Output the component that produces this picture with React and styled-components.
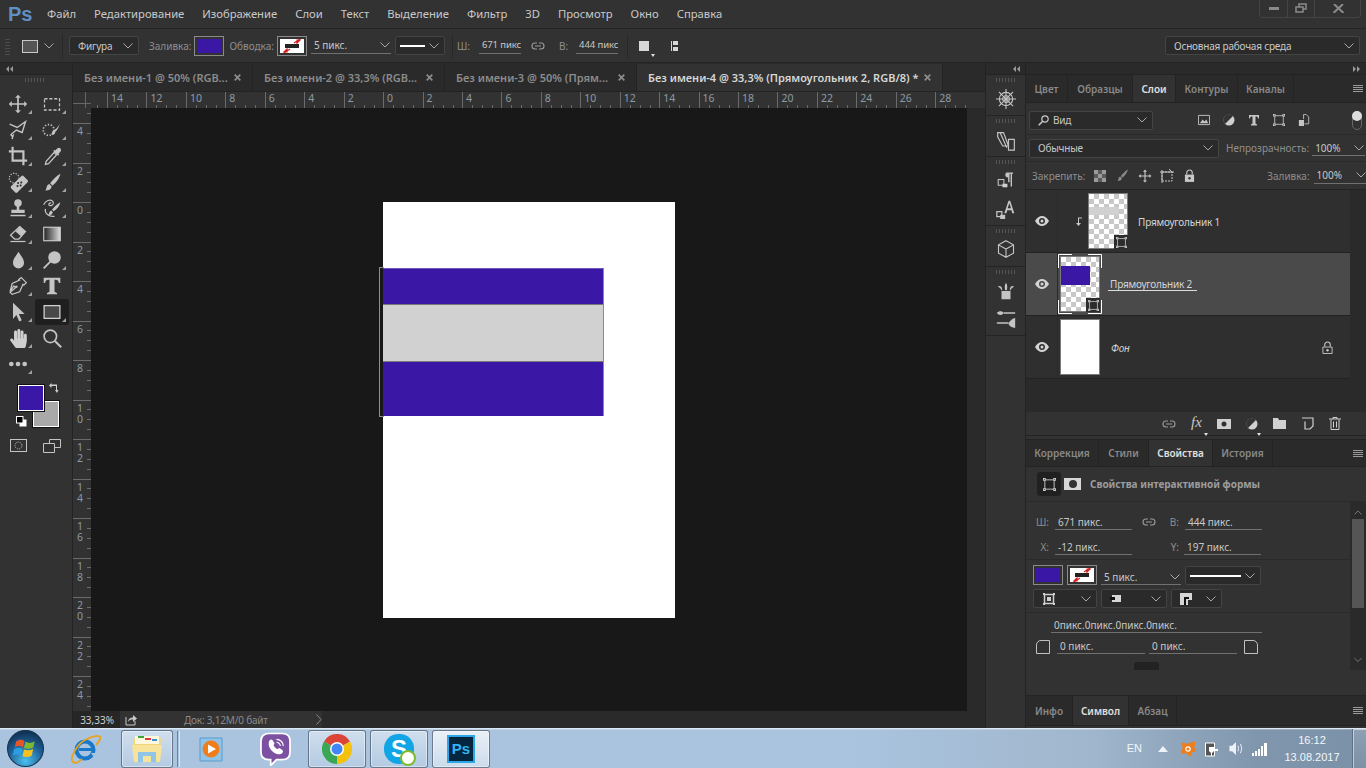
import React from "react";
import styled, { createGlobalStyle } from "styled-components";
import { FaHandPaper } from "react-icons/fa";

const Global = createGlobalStyle`
  html, body { margin: 0; padding: 0; background: #323232; }
  * { box-sizing: border-box; }
  body { font-family: "Noto Sans", "Open Sans", sans-serif; }
`;

const PANEL = "#323232";
const DARK = "#2a2a2a";
const LINE = "#232323";
const PURPLE = "#3a17a5";

const Screen = styled.div`
  width: 1366px;
  height: 768px;
  overflow: hidden;
  display: flex;
  flex-direction: column;
  background: ${PANEL};
  color: #c8c8c8;
  font-size: 10px;
  line-height: 1;
`;

const Ico = styled.svg`
  display: block;
  flex: none;
  width: ${(p) => p.$w || 16}px;
  height: ${(p) => p.$h || p.$w || 16}px;
  margin-left: ${(p) => p.$ml || 0}px;
  color: ${(p) => p.$c || "#c4c4c4"};
  fill: currentColor;
`;

const Icon = ({ w, h, ml, c, box = "0 0 24 24", children }) => (
  <Ico $w={w} $h={h} $ml={ml} $c={c} viewBox={box}>
    {children}
  </Ico>
);

const stroke = (w = 2) => ({ fill: "none", stroke: "currentColor", strokeWidth: w });

/* ---------- menu ---------- */

const MenuBar = styled.div`
  height: 29px;
  flex: none;
  display: flex;
  align-items: center;
  padding-left: 8px;
  border-bottom: 1px solid ${LINE};
`;

const Logo = styled.div`
  width: 39px;
  font-size: 20px;
  font-weight: 700;
  color: #5f8fc4;
  font-family: "Liberation Sans", sans-serif;
`;

const MenuItem = styled.span`
  margin-right: 18px;
  font-size: 11.25px;
  color: #c9c9c9;
  white-space: nowrap;
`;

const WinButtons = styled.div`
  margin-left: auto;
  margin-right: 5px;
  margin-top: -11px;
  width: 102px;
  height: 18px;
  display: grid;
  grid-template-columns: 28px 27px 47px;
  border: 1px solid #444;
  border-top: 0;
  border-radius: 0 0 4px 4px;
  & > div {
    display: flex;
    align-items: center;
    justify-content: center;
    border-right: 1px solid #444;
  }
  & > div:last-child { border-right: 0; }
`;

/* ---------- options ---------- */

const OptionsBar = styled.div`
  height: 34px;
  flex: none;
  display: flex;
  align-items: center;
  border-bottom: 1px solid ${LINE};
`;

const Grip = styled.div`
  flex: none;
  width: ${(p) => p.$w || 5}px;
  height: ${(p) => p.$h || 18}px;
  margin-left: ${(p) => p.$ml || 0}px;
  background: ${(p) =>
    p.$across
      ? "repeating-linear-gradient(90deg,#555 0 1px,transparent 1px 3px)"
      : "repeating-linear-gradient(0deg,#4c4c4c 0 1px,transparent 1px 3px)"};
`;

const Divider = styled.div`
  flex: none;
  width: 1px;
  height: 24px;
  background: #282828;
  margin-left: ${(p) => p.$ml || 0}px;
`;

const Select = styled.div`
  flex: none;
  width: ${(p) => p.$w}px;
  height: ${(p) => p.$h || 19}px;
  margin-left: ${(p) => p.$ml || 0}px;
  display: flex;
  align-items: center;
  justify-content: space-between;
  padding: 0 5px 0 8px;
  background: #2a2a2a;
  border: 1px solid #444;
  border-radius: 2px;
  letter-spacing: -0.2px;
  color: #c8c8c8;
`;

const WorkspaceSelect = styled(Select)`
  margin-left: auto;
  margin-right: 6px;
`;

const SelectLead = styled.span`
  display: flex;
  align-items: center;
  gap: 4px;
`;

const Chevron = ({ ml, c = "#a8a8a8", w = 10 }) => (
  <Icon w={w} h={6} ml={ml} c={c} box="0 0 10 6">
    <path d="M.5.5 5 5 9.5.5" {...stroke(1)} />
  </Icon>
);

const Label = styled.span`
  flex: none;
  margin-left: ${(p) => p.$ml || 0}px;
  color: #8e8e8e;
  font-size: 10px;
  white-space: nowrap;
`;

const Swatch = styled.div`
  flex: none;
  width: 30px;
  height: 20px;
  margin-left: ${(p) => p.$ml || 0}px;
  border: 1px solid #8a8a8a;
  padding: 2px;
  display: flex;
  & > div {
    flex: 1;
    background: ${(p) => p.$fill || "#fff"};
    display: flex;
  }
`;

const NoStroke = () => (
  <svg viewBox="0 0 24 14" width="100%" height="100%" preserveAspectRatio="none">
    <rect x="5" y="5" width="14" height="4" fill="#222" />
    <path d="M17 1 20 1 17 4ZM4 13 7 10 7 13Z M14 4 20 0 M4 14 10 10" stroke="#d01f1f" strokeWidth="1.2" fill="#d01f1f" />
  </svg>
);

const Field = styled.div`
  flex: none;
  width: ${(p) => p.$w}px;
  height: 16px;
  margin-left: ${(p) => p.$ml || 0}px;
  display: flex;
  align-items: center;
  justify-content: space-between;
  padding: 0 ${(p) => p.$pr ?? 3}px 0 3px;
  border-bottom: 1px solid #707070;
  color: #c8c8c8;
  font-size: 10px;
  white-space: nowrap;
  overflow: hidden;
`;

const Clip = styled.span`
  font-size: 9.5px;
  letter-spacing: -0.1px;
`;

const LinkIcon = ({ ml }) => (
  <Icon w={14} h={8} ml={ml} c="#9a9a9a" box="0 0 14 8">
    <path d="M6 1H4a3 3 0 0 0 0 6h2M8 1h2a3 3 0 0 1 0 6H8M4 4h6" {...stroke(1.1)} />
  </Icon>
);

const LinkSlot = styled.div`
  height: 16px;
  display: flex;
  align-items: center;
`;

const LineSelect = styled(Select)`
  padding: 0 5px 0 4px;
  gap: 4px;
  & > i {
    flex: 1;
    height: 2px;
    background: #fff;
  }
`;

const HasMenu = styled.div`
  position: relative;
  flex: none;
  margin-left: ${(p) => p.$ml || 0}px;
  &::after {
    content: "";
    position: absolute;
    right: ${(p) => p.$r ?? -6}px;
    bottom: -6px;
    border-left: 2.5px solid transparent;
    border-right: 2.5px solid transparent;
    border-top: 3px solid #e0e0e0;
  }
`;

/* ---------- workspace ---------- */

const Workspace = styled.div`
  flex: 1;
  min-height: 0;
  display: flex;
`;

const CollapseStrip = styled.div`
  height: 12px;
  flex: none;
  background: ${DARK};
  display: flex;
  justify-content: ${(p) => p.$justify || "flex-start"};
  align-items: center;
  padding: 0 5px;
  border-bottom: 1px solid ${LINE};
`;

const Arrows = ({ flip }) => (
  <Icon w={8} h={6} c="#9a9a9a" box="0 0 8 6">
    <path d={flip ? "M0 0 3 3 0 6ZM4 0 7 3 4 6Z" : "M4 0 1 3 4 6ZM8 0 5 3 8 6Z"} />
  </Icon>
);

const ToolColumn = styled.div`
  width: 73px;
  flex: none;
  display: flex;
  flex-direction: column;
  border-right: 1px solid ${LINE};
`;

const ToolGrip = styled.div`
  height: 16px;
  padding: 3px 0 0 25px;
`;

const ToolGrid = styled.div`
  display: grid;
  grid-template-columns: 34px 34px;
  grid-auto-rows: 26px;
  padding-left: 1px;
`;

const Tool = styled.div`
  position: relative;
  display: flex;
  align-items: center;
  justify-content: center;
  background: ${(p) => (p.$active ? "#1f1f1f" : "transparent")};
  border-radius: 3px;
  &::after {
    content: "";
    display: ${(p) => (p.$more ? "block" : "none")};
    position: absolute;
    right: 3px;
    bottom: 3px;
    width: 0;
    height: 0;
    border-left: 4px solid transparent;
    border-bottom: 4px solid #a0a0a0;
  }
`;

const Colors = styled.div`
  position: relative;
  height: 47px;
  margin-top: 5px;
  flex: none;
`;

const ColorChip = styled.div`
  position: absolute;
  left: ${(p) => p.$x}px;
  top: ${(p) => p.$y}px;
  width: 26px;
  height: 26px;
  background: ${(p) => p.$c};
  border: 1px solid #fff;
  outline: 1px solid #111;
`;

const ColorGlyph = styled.div`
  position: absolute;
  left: ${(p) => p.$x}px;
  top: ${(p) => p.$y}px;
`;

const ModeRow = styled.div`
  display: flex;
  padding: 10px 0 0 10px;
  gap: 16px;
`;

const DocArea = styled.div`
  width: 912px;
  flex: none;
  display: flex;
  flex-direction: column;
`;

const TabRow = styled.div`
  height: 29px;
  flex: none;
  display: flex;
  background: ${DARK};
  padding-top: 1px;
  border-bottom: 1px solid ${LINE};
`;

const DocTab = styled.div`
  width: ${(p) => p.$w}px;
  flex: none;
  display: flex;
  align-items: center;
  justify-content: space-between;
  padding: 0 11px;
  background: ${(p) => (p.$active ? PANEL : DARK)};
  border-right: 1px solid ${LINE};
  color: ${(p) => (p.$active ? "#d6d6d6" : "#8c8c8c")};
  font-weight: 600;
  font-size: 11px;
  white-space: nowrap;
`;

const CloseX = () => (
  <Icon w={7} c="#8c8c8c" box="0 0 7 7">
    <path d="M.7.7 6.3 6.3M6.3.7.7 6.3" {...stroke(1.7)} />
  </Icon>
);

const RulerTop = styled.div`
  height: 16px;
  flex: none;
  display: flex;
  overflow: hidden;
  background: ${PANEL};
`;

const RulerCorner = styled.div`
  width: 18px;
  flex: none;
  background:
    linear-gradient(90deg, transparent 12px, #666 12px 13px, transparent 13px) 0 0 / 18px 16px,
    linear-gradient(0deg, transparent 4px, #666 4px 5px, transparent 5px) 0 0 / 18px 16px;
`;

const RulerOffset = styled.div`
  flex: none;
  width: 16px;
  height: 16px;
  background: repeating-linear-gradient(90deg, transparent 0 6px, #6a6a6a 6px 7px, transparent 7px 10px) bottom / 100% 3px no-repeat;
`;

const RulerCell = styled.div`
  flex: none;
  width: 39.45px;
  padding: 1px 0 0 3px;
  border-left: 1px solid #6b6b6b;
  color: #8d9aa6;
  font-size: 10.5px;
  background: repeating-linear-gradient(90deg, transparent 0 9px, #6a6a6a 9px 10px) bottom / 100% 3px no-repeat;
`;

const DocMiddle = styled.div`
  flex: 1;
  min-height: 0;
  display: flex;
`;

const RulerLeft = styled.div`
  width: 18px;
  flex: none;
  overflow: hidden;
`;

const RulerRow = styled.div`
  height: 39.5px;
  padding: 2px 0 0 4px;
  border-top: 1px solid #6b6b6b;
  color: #8d9aa6;
  font-size: 10.5px;
  line-height: 11px;
  white-space: pre-line;
  background: repeating-linear-gradient(0deg, transparent 0 9px, #6a6a6a 9px 10px) right / 4px 100% no-repeat;
`;

const RulerStub = styled.div`
  height: 15px;
  background: repeating-linear-gradient(0deg, transparent 0 9px, #6a6a6a 9px 10px) right / 4px 100% no-repeat;
`;

const Canvas = styled.div`
  flex: 1;
  background: #181818;
  padding: 94px 0 0 292px;
`;

const Page = styled.div`
  width: 292px;
  height: 416px;
  background: #fff;
  padding-top: 66px;
`;

const ShapeStack = styled.div`
  position: relative;
  width: 221px;
  display: flex;
  flex-direction: column;
  border-right: 1px solid #8a8a9a;
  &::before {
    content: "";
    position: absolute;
    left: -4px;
    top: -1px;
    bottom: -1px;
    width: 4px;
    border: 1px solid #8e8e8e;
    border-right: 0;
  }
`;

const Band = styled.div`
  height: ${(p) => p.$h}px;
  background: ${(p) => p.$c};
  border-top: 1px solid ${(p) => p.$edge};
`;

const Gutter = styled.div`
  width: 18px;
  flex: none;
  background: ${DARK};
`;

const StatusBar = styled.div`
  height: 17px;
  flex: none;
  display: flex;
  align-items: center;
  background: ${DARK};
`;

const Zoom = styled.div`
  width: 47px;
  flex: none;
  height: 100%;
  display: flex;
  align-items: center;
  justify-content: flex-end;
  padding-right: 6px;
  background: #262626;
  color: #cfcfcf;
`;

const DocInfo = styled.div`
  width: 202px;
  height: 100%;
  display: flex;
  align-items: center;
  background: ${PANEL};
  padding-left: 5px;
  color: #8a8a8a;
  letter-spacing: -0.2px;
  & > span {
    margin-left: 47px;
    flex: 1;
  }
`;

/* ---------- dock ---------- */

const Dock = styled.div`
  width: 41px;
  flex: none;
  display: flex;
  flex-direction: column;
  border-left: 1px solid ${LINE};
  border-right: 1px solid ${LINE};
`;

const DockGroup = styled.div`
  height: ${(p) => p.$h}px;
  flex: none;
  border-bottom: 1px solid ${LINE};
  display: flex;
  flex-direction: column;
  align-items: center;
  padding-top: 3px;
  & > svg:first-of-type {
    margin-top: 7px;
  }
  & > svg + svg {
    margin-top: ${(p) => p.$gap || 0}px;
  }
`;

/* ---------- panels ---------- */

const Panels = styled.div`
  flex: 1;
  display: flex;
  flex-direction: column;
  min-width: 0;
`;

const PanelTabs = styled.div`
  height: ${(p) => p.$h || 28}px;
  flex: none;
  display: flex;
  align-items: stretch;
  background: ${DARK};
  border-bottom: 1px solid ${LINE};
  padding-right: 3px;
`;

const PanelTab = styled.div`
  width: ${(p) => p.$w}px;
  flex: none;
  display: flex;
  align-items: center;
  justify-content: center;
  background: ${(p) => (p.$active ? PANEL : "transparent")};
  border-right: 1px solid ${LINE};
  color: ${(p) => (p.$active ? "#e0e0e0" : "#888")};
  font-weight: 600;
`;

const PanelMenu = styled.div`
  margin: auto 0 auto auto;
  width: 10px;
  height: 7px;
  background: repeating-linear-gradient(0deg, #9a9a9a 0 1px, transparent 1px 2px);
`;

const LayerFilters = styled.div`
  height: 32px;
  display: flex;
  align-items: center;
  padding: 3px 0 0 3px;
  border-bottom: 1px solid #2a2a2a;
`;

const Toggle = styled.div`
  width: 10px;
  height: 19px;
  margin-left: 42px;
  border: 1px solid #666;
  border-radius: 5px;
  position: relative;
  &::before {
    content: "";
    position: absolute;
    inset: -1px -1px auto -1px;
    height: 10px;
    border-radius: 5px;
    background: #ddd;
  }
`;

const FilterIcons = styled.div`
  display: flex;
  gap: 13px;
  margin-left: 45px;
  align-items: center;
`;

const BlendRow = styled.div`
  height: 27px;
  display: flex;
  align-items: center;
  padding-left: 3px;
  border-bottom: 1px solid #2a2a2a;
`;

const LockRow = styled.div`
  height: 28px;
  display: flex;
  align-items: center;
  padding-left: 6px;
  border-bottom: 1px solid ${LINE};
`;

const LayersBody = styled.div`
  height: 222px;
  flex: none;
  display: flex;
  background: ${DARK};
`;

const LayerList = styled.div`
  width: 324px;
  flex: none;
  display: flex;
  flex-direction: column;
`;

const Layer = styled.div`
  height: 63px;
  flex: none;
  display: flex;
  align-items: center;
  background: ${(p) => (p.$selected ? "#4a4a4a" : "#2f2f2f")};
  border-bottom: 1px solid ${LINE};
`;

const EyeCell = styled.div`
  width: 32px;
  height: 100%;
  flex: none;
  display: flex;
  align-items: center;
  justify-content: center;
  border-right: 1px solid #2a2a2a;
`;

const Clipped = styled.div`
  width: 30px;
  flex: none;
  display: flex;
  justify-content: flex-end;
  padding-right: 6px;
`;

const Thumb = styled.div`
  position: relative;
  width: 40px;
  height: 56px;
  margin-left: ${(p) => p.$ml || 0}px;
  flex: none;
  border: 1px solid #7a7a7a;
  background: ${(p) =>
    p.$plain ? "#fff" : "repeating-conic-gradient(#c8c8c8 0 25%, #fff 0 50%) 0 0 / 10px 10px"};
`;

const ThumbFill = styled.div`
  height: ${(p) => p.$h}px;
  width: ${(p) => p.$w}px;
  margin-top: ${(p) => p.$top}px;
  background: ${(p) => p.$c};
`;

const ShapeBadge = styled.div`
  position: absolute;
  right: -1px;
  bottom: -1px;
  width: 14px;
  height: 14px;
  background: #2c2c2c;
  display: flex;
  align-items: center;
  justify-content: center;
`;

const Brackets = styled.svg`
  position: absolute;
  left: -3px;
  top: -3px;
  width: 44px;
  height: 60px;
`;

const LayerName = styled.span`
  margin-left: ${(p) => p.$ml}px;
  margin-top: 2px;
  color: #cfd6dc;
  letter-spacing: -0.2px;
  font-style: ${(p) => (p.$italic ? "italic" : "normal")};
  ${(p) => p.$under && "border-bottom: 1px solid #dcdcdc; padding: 0 5px 1px 2px;"}
`;

const LayerLock = styled.div`
  margin: 0 17px 0 auto;
`;

const LayerRail = styled.div`
  flex: 1;
  background: ${DARK};
`;

const LayersFooter = styled.div`
  height: 24px;
  flex: none;
  display: flex;
  align-items: center;
  padding-left: 136px;
  gap: 15px;
  background: ${PANEL};
  border-bottom: 1px solid ${LINE};
`;

const FxMark = styled.span`
  color: #c8c8c8;
  font-family: "Liberation Serif", serif;
  font-style: italic;
  font-size: 15px;
  display: block;
  margin-top: -2px;
`;

const PanelGap = styled.div`
  height: ${(p) => p.$h}px;
  flex: none;
  background: ${PANEL};
  border-bottom: 1px solid ${LINE};
`;

const PropsHead = styled.div`
  height: 35px;
  flex: none;
  display: flex;
  align-items: center;
  padding-left: 11px;
  border-bottom: 1px solid #2a2a2a;
`;

const ShapeBtn = styled.div`
  width: 24px;
  height: 24px;
  flex: none;
  display: flex;
  align-items: center;
  justify-content: center;
  background: #202020;
  border-radius: 3px;
`;

const MaskBtn = styled.div`
  width: 17px;
  height: 12px;
  margin-left: 3px;
  flex: none;
  background: #d8d8d8;
  display: flex;
  align-items: center;
  justify-content: center;
  &::before {
    content: "";
    width: 8px;
    height: 8px;
    border-radius: 50%;
    background: #333;
  }
`;

const PropsTitle = styled.span`
  margin-left: 9px;
  color: #9c9c9c;
  font-weight: 700;
`;

const PropsBody = styled.div`
  height: 168px;
  flex: none;
  display: flex;
`;

const PropsMain = styled.div`
  width: 324px;
  flex: none;
`;

const PropRow = styled.div`
  height: ${(p) => p.$h}px;
  display: flex;
  align-items: flex-end;
  padding-left: ${(p) => p.$pl || 0}px;
  padding-bottom: ${(p) => p.$pb || 0}px;
  ${(p) => p.$line && "border-bottom: 1px solid #2a2a2a;"}
`;

const FieldLabel = styled(Label)`
  width: ${(p) => p.$w}px;
  height: 16px;
  display: flex;
  align-items: center;
  justify-content: flex-end;
`;

const Scroll = styled.div`
  flex: 1;
  background: ${DARK};
  display: flex;
  flex-direction: column;
  align-items: center;
  padding-top: 8px;
`;

const ScrollThumb = styled.div`
  width: 12px;
  height: 89px;
  margin: 4px 0 auto;
  background: #555;
`;

const ScrollEnd = styled.div`
  padding-bottom: 7px;
`;

const CornerIcon = styled.div`
  width: 14px;
  height: 14px;
  flex: none;
  margin-left: ${(p) => p.$ml || 0}px;
  border: 1px solid #c0c0c0;
  border-radius: ${(p) => (p.$right ? "0 5px 0 0" : "5px 0 0 0")};
`;

const MiniTab = styled.div`
  width: 25px;
  height: 8px;
  margin: 8px 0 0 108px;
  background: #222;
  border-radius: 3px 3px 0 0;
`;

/* ---------- taskbar ---------- */

const Taskbar = styled.div`
  height: 40px;
  flex: none;
  display: flex;
  align-items: center;
  background: linear-gradient(90deg, #aac4df 0%, #aac4df 62%, #a0b6cc 80%, #8096ad 92%, #7b91a8 100%);
  border-top: 1px solid #dce8f3;
  box-shadow: inset 0 1px 0 rgba(255, 255, 255, 0.25);
`;

const TaskSlot = styled.div`
  width: ${(p) => p.$w}px;
  height: 38px;
  flex: none;
  margin-left: ${(p) => p.$ml || 0}px;
  display: flex;
  align-items: center;
  justify-content: center;
  ${(p) =>
    p.$open &&
    `border: 1px solid rgba(70,85,105,.75);
     border-radius: 3px;
     background: linear-gradient(180deg, rgba(255,255,255,.45), rgba(255,255,255,.12));
     box-shadow: inset 0 0 0 1px rgba(255,255,255,.45);`}
  ${(p) => p.$focus && "background: linear-gradient(180deg, rgba(255,255,255,.75), rgba(255,255,255,.4));"}
`;

const TaskDivider = styled.div`
  width: 3px;
  height: 36px;
  margin-left: 4px;
  flex: none;
  border-left: 1px solid #6f8297;
  border-right: 1px solid #dbe6f1;
`;

const PsTile = styled.div`
  width: 28px;
  height: 28px;
  background: #06263f;
  border: 2px solid #2ba6e8;
  color: #32b4f2;
  font-family: "Liberation Sans", sans-serif;
  font-weight: 700;
  font-size: 15px;
  display: flex;
  align-items: center;
  justify-content: center;
`;

const SkypeWrap = styled.div`
  position: relative;
  width: 30px;
  height: 30px;
  border-radius: 48%;
  background: #12a5e5;
  color: #fff;
  font-family: "Liberation Sans", sans-serif;
  font-size: 24px;
  font-weight: 700;
  display: flex;
  align-items: center;
  justify-content: center;
  &::after {
    content: "";
    position: absolute;
    right: -2px;
    bottom: -2px;
    width: 12px;
    height: 12px;
    border-radius: 50%;
    background: #fff;
    border: 2px solid #7dba2d;
  }
`;

const Tray = styled.div`
  margin-left: auto;
  height: 100%;
  display: flex;
  align-items: center;
`;

const TrayText = styled.span`
  color: #f2f6fa;
  font-size: 11px;
  font-family: "Liberation Sans", sans-serif;
`;

const Clock = styled.div`
  width: 72px;
  margin-left: 8px;
  text-align: center;
  color: #f4f7fa;
  font-size: 11px;
  line-height: 17px;
  font-family: "Liberation Sans", sans-serif;
`;

const ShowDesktop = styled.div`
  width: 14px;
  height: 39px;
  margin-left: 4px;
  background: linear-gradient(180deg, #8ea0b3, #7d90a5);
  border-left: 1px solid #5f7186;
  box-shadow: inset 1px 1px 0 rgba(255, 255, 255, 0.5);
`;

/* ---------- icons ---------- */

const ShapeIcon = ({ w = 14, c = "#c8c8c8" }) => (
  <Icon w={w} c={c} box="0 0 14 14">
    <path d="M2 2H12V12H2Z" {...stroke(1)} />
    <path d="M0 0h3v3H0zM11 0h3v3h-3zM0 11h3v3H0zM11 11h3v3h-3z" />
    <path d="M1 1h1v1H1zM12 1h1v1h-1zM1 12h1v1H1zM12 12h1v1h-1z" fill="#2b2b2b" />
  </Icon>
);

const Eye = () => (
  <Icon w={14} h={10} c="#d4d4d4" box="0 0 14 10">
    <path fillRule="evenodd" d="M0 5C2 1.500 4.500 0 7 0s5 1.500 7 5c-2 3.500-4.500 5-7 5S2 8.500 0 5Zm7-3a3 3 0 1 0 0 6 3 3 0 0 0 0-6Zm0 1.500a1.500 1.500 0 1 1 0 3 1.500 1.500 0 0 1 0-3Z" />
  </Icon>
);

const MoveGlyph = ({ w = 20, ml }) => (
  <Icon w={w} ml={ml}>
    <path d="M12 1l3.500 3.500H13V11h6.500V8.500L23 12l-3.500 3.500V13H13v6.500h2.500L12 23l-3.500-3.500H11V13H4.500v2.500L1 12l3.500-3.500V11H11V4.500H8.500z" />
  </Icon>
);

const tools = [
  [<MoveGlyph />, true],
  [<Icon w={18}><rect x="2" y="5" width="20" height="15" {...stroke(1.7)} strokeDasharray="4 2.5" /></Icon>, true],
  [<Icon w={20}><path d="M2 5l9 4 10-7-4 13-7-3-6 5c-1 1 1 3 2 2l-1 4" {...stroke(1.700)} /></Icon>, true],
  [<Icon w={20}><circle cx="8" cy="12" r="6.500" {...stroke(2)} strokeDasharray="1.600 2" /><path d="M22 2c-1 5-5 9-9 11l-2 4c2 2 5 0 5-3 3-2 5-8 6-12z" /></Icon>, true],
  [<Icon w={20}><path d="M5.500 1v16.500H23M1 6.500h17.500V23" {...stroke(2.600)} /></Icon>, true],
  [<Icon w={19}><path d="M14 7l3 3L7 21l-4 1 1-4z" {...stroke(1.6)} /><path d="M13 5l6 6 1.500-1.500-1-1L22 6a2.800 2.800 0 0 0-4-4l-2.500 2.500-1-1z" /></Icon>, true],
  [<Icon w={21}><circle cx="7" cy="7" r="5.500" {...stroke(1.300)} strokeDasharray="1.500 1.500" /><g transform="rotate(-45 13 14)"><rect x="3" y="9" width="20" height="10" rx="2" /><g fill="#333"><circle cx="13" cy="12" r="1.200" /><circle cx="13" cy="16" r="1.200" /><circle cx="10" cy="14" r="1.200" /><circle cx="16" cy="14" r="1.200" /></g></g></Icon>, true],
  [<Icon w={19}><path d="M22 1c-1 5-5 11-10 15l-3-3C13 8 18 3 22 1z" /><path d="M8 14l3 3c-1 4-4 5-8 5 2-2 1-7 5-8z" /></Icon>, true],
  [<Icon w={20}><circle cx="12" cy="6" r="4.500" /><path d="M10.500 9h3v5h-3zM4 14h16v4H4zM3 20h18v2H3z" /></Icon>, true],
  [<Icon w={20}><path d="M2 8c2-5 8-7 11-4 2 3-1 6-4 5-2-1 0-4 2-3" {...stroke(1.400)} /><path d="M4 13c-1 5 4 10 11 9" {...stroke(1.400)} /><path d="M22 5c-1 5-4 8-8 11l-2-2c3-4 6-7 10-9z" /><path d="M11 15l2 2c-.5 3-3 4-6 4 2-1 1-5 4-6z" /></Icon>, true],
  [<Icon w={20}><path d="M14 3l7 6-8 9H8l-5-4.500z" {...stroke(1.500)} /><path d="M14 3l7 6-5 6-7-6z" /><path d="M3 21h18" {...stroke(1.500)} /></Icon>, true],
  [<Icon w={18}><defs><linearGradient id="grad" x1="0" x2="1"><stop offset="0" stopColor="#222" /><stop offset="1" stopColor="#ddd" /></linearGradient></defs><rect x="1" y="3" width="22" height="18" fill="url(#grad)" stroke="#d0d0d0" strokeWidth="1.500" /></Icon>, false],
  [<Icon w={19}><path d="M12 1c3 5 7 9 7 14a7 7 0 0 1-14 0c0-5 4-9 7-14z" /></Icon>, true],
  [<Icon w={20}><circle cx="15" cy="9" r="7.500" /><path d="M10 14 2 22" {...stroke(2.200)} /></Icon>, true],
  [<Icon w={20}><path d="M16 2l6 6-3 3-1-1-4 9-9 3-2.500-2.500L9 14l-2-2-4.500 6.500L5 9l9-4-1-1z" {...stroke(1.500)} /><circle cx="10" cy="13" r="1.500" /></Icon>, true],
  [<Icon w={20}><path d="M2 2h20v6.500h-1.800C20 5.500 19 4.500 15 4.500V19l3 1.500V22H6v-1.500L9 19V4.500c-4 0-5 1-5.200 4H2z" /></Icon>, false],
  [<Icon w={20}><path d="M6 1l14 13.500h-7l3.500 7.500-3 1.500-3.500-8L6 20.500z" /></Icon>, true],
  [<Icon w={18} c="#d0d0d0"><rect x="1.500" y="3.500" width="21" height="17" fill="#484848" stroke="currentColor" strokeWidth="1.700" /></Icon>, true, true],
  [<FaHandPaper size={19} color="#cfcfcf" />, true],
  [<Icon w={20}><circle cx="10" cy="10" r="7.500" {...stroke(2)} /><path d="M15.500 15.500 23 23" {...stroke(2.500)} /></Icon>, false],
  [<Icon w={20}><circle cx="4" cy="12" r="2.800" /><circle cx="12" cy="12" r="2.800" /><circle cx="20" cy="12" r="2.800" /></Icon>, true],
];

const rulerH = [14, 12, 10, 8, 6, 4, 2, 0, 2, 4, 6, 8, 10, 12, 14, 16, 18, 20, 22, 24, 26, 28];
const rulerV = [4, 2, 0, 2, 4, 6, 8, 10, 12, 14, 16, 18, 20, 22, 24];
const menu = ["Файл", "Редактирование", "Изображение", "Слои", "Текст", "Выделение", "Фильтр", "3D", "Просмотр", "Окно", "Справка"];

const StrokeSwatch = ({ ml }) => (
  <Swatch $ml={ml}>
    <div>
      <NoStroke />
    </div>
  </Swatch>
);

const MenuRow = () => (
  <MenuBar>
    <Logo>Ps</Logo>
    {menu.map((m) => (
      <MenuItem key={m}>{m}</MenuItem>
    ))}
    <WinButtons>
      <div>
        <Icon w={10} h={3} c="#8a8a8a" box="0 0 10 3"><rect width="10" height="3" /></Icon>
      </div>
      <div>
        <Icon w={12} h={10} c="#8a8a8a" box="0 0 12 10">
          <path d="M1 4h7v5H1zM4 4V1h7v5H8" {...stroke(1.500)} />
        </Icon>
      </div>
      <div>
        <Icon w={11} h={9} c="#8a8a8a" box="0 0 11 9">
          <path d="M1 0l9.500 9M10 0 .5 9" {...stroke(2)} />
        </Icon>
      </div>
    </WinButtons>
  </MenuBar>
);

const Options = () => (
  <OptionsBar>
    <Grip $ml={5} />
    <Icon w={16} ml={12} c="#c8c8c8" box="0 0 16 16">
      <rect x=".5" y="2.500" width="15" height="12" fill="#555" stroke="#c8c8c8" />
    </Icon>
    <Chevron ml={6} />
    <Divider $ml={8} />
    <Select $w={70} $ml={6}>
      Фигура <Chevron />
    </Select>
    <Label $ml={10}>Заливка:</Label>
    <Swatch $ml={3} $fill={PURPLE}>
      <div />
    </Swatch>
    <Label $ml={5}>Обводка:</Label>
    <StrokeSwatch ml={3} />
    <Field $w={80} $ml={4} $pr={1}>
      5 пикс. <Chevron />
    </Field>
    <LineSelect $w={50} $ml={4}>
      <i />
      <Chevron />
    </LineSelect>
    <Divider $ml={7} />
    <Label $ml={4}>Ш:</Label>
    <Field $w={42} $ml={9} $pr={0}>
      <Clip>671 пикс</Clip>
    </Field>
    <LinkIcon ml={10} />
    <Label $ml={14}>В:</Label>
    <Field $w={42} $ml={8} $pr={0}>
      <Clip>444 пикс</Clip>
    </Field>
    <Divider $ml={9} />
    <HasMenu $ml={11}>
      <Icon w={10} c="#d8d8d8" box="0 0 10 10"><rect width="10" height="10" /></Icon>
    </HasMenu>
    <Icon w={7} h={10} ml={22} c="#d8d8d8" box="0 0 7 10">
      <path d="M0 0h1v10H0zM2 0h5v4H2zM2 6h5v4H2z" />
    </Icon>
    <WorkspaceSelect $w={195}>
      Основная рабочая среда <Chevron />
    </WorkspaceSelect>
  </OptionsBar>
);

const Tools = () => (
  <ToolColumn>
    <CollapseStrip>
      <Arrows />
    </CollapseStrip>
    <ToolGrip>
      <Grip $across $w={20} $h={4} />
    </ToolGrip>
    <ToolGrid>
      {tools.map(([icon, more, active], i) => (
        <Tool key={i} $more={more} $active={active}>
          {icon}
        </Tool>
      ))}
    </ToolGrid>
    <Colors>
      <ColorChip $x={33} $y={19} $c="#a9a9a9" />
      <ColorChip $x={18} $y={3} $c={PURPLE} />
      <ColorGlyph $x={49} $y={1}>
        <Icon w={11} c="#d0d0d0" box="0 0 11 11">
          <path d="M0 2.500 2.500 0v1.500H8V7h1.500L8 10 6 7h1V3H2.500v2z" />
        </Icon>
      </ColorGlyph>
      <ColorGlyph $x={16} $y={34}>
        <Icon w={11} box="0 0 11 11">
          <rect x="3.500" y="3.500" width="7" height="7" fill="#fff" />
          <rect x=".5" y=".5" width="6.500" height="6.500" fill="#000" stroke="#fff" />
        </Icon>
      </ColorGlyph>
    </Colors>
    <ModeRow>
      <Icon w={17} h={13} box="0 0 17 13">
        <rect x=".5" y=".5" width="16" height="12" {...stroke(1)} />
        <circle cx="8.500" cy="6.500" r="3.500" {...stroke(1)} strokeDasharray="1 1" />
      </Icon>
      <Icon w={19} h={14} box="0 0 19 14">
        <path d="M.5 4.500h11v9H.5zM6.500 4.500v-4h11v8h-6" {...stroke(1)} />
      </Icon>
    </ModeRow>
  </ToolColumn>
);

const DocumentArea = () => (
  <DocArea>
    <TabRow>
      <DocTab $w={180}>
        Без имени-1 @ 50% (RGB... <CloseX />
      </DocTab>
      <DocTab $w={192}>
        Без имени-2 @ 33,3% (RGB... <CloseX />
      </DocTab>
      <DocTab $w={192}>
        Без имени-3 @ 50% (Прям... <CloseX />
      </DocTab>
      <DocTab $w={306} $active>
        Без имени-4 @ 33,3% (Прямоугольник 2, RGB/8) * <CloseX />
      </DocTab>
    </TabRow>
    <RulerTop>
      <RulerCorner />
      <RulerOffset />
      {rulerH.map((n, i) => (
        <RulerCell key={i}>{n}</RulerCell>
      ))}
    </RulerTop>
    <DocMiddle>
      <RulerLeft>
        <RulerStub />
        {rulerV.map((n, i) => (
          <RulerRow key={i}>{String(n).split("").join("\n")}</RulerRow>
        ))}
      </RulerLeft>
      <Canvas>
        <Page>
          <ShapeStack>
            <Band $h={36} $c={PURPLE} $edge="#6b56b8" />
            <Band $h={57} $c="#d1d1d1" $edge="#777" />
            <Band $h={55} $c={PURPLE} $edge="#7c7c7c" />
          </ShapeStack>
        </Page>
      </Canvas>
      <Gutter />
    </DocMiddle>
    <StatusBar>
      <Zoom>33,33%</Zoom>
      <DocInfo>
        <Icon w={12} c="#c8c8c8" box="0 0 12 12">
          <path d="M1 3v8h9V7" {...stroke(1)} />
          <path d="M3 8c0-3 2-4.500 5-4.500V1l4 3.500L8 8V5.500C6 5.500 4 6 3 8z" />
        </Icon>
        <span>Док: 3,12M/0 байт</span>
        <Icon w={6} h={11} c="#8a8a8a" box="0 0 6 11">
          <path d="M.5.500 5 5.500.5 10.500" {...stroke(1)} />
        </Icon>
      </DocInfo>
    </StatusBar>
  </DocArea>
);

const DockBar = () => (
  <Dock>
    <CollapseStrip $justify="flex-end">
      <Arrows />
    </CollapseStrip>
    <DockGroup $h={41}>
      <Grip $across $w={20} $h={4} />
      <Icon w={20}>
        <g {...stroke(1.300)}>
          <circle cx="12" cy="12" r="4" />
          <circle cx="12" cy="12" r="8" />
          <path d="M12 0v24M0 12h24M3.500 3.500l17 17M20.500 3.500l-17 17" />
        </g>
      </Icon>
    </DockGroup>
    <DockGroup $h={41}>
      <Grip $across $w={20} $h={4} />
      <Icon w={20} h={22}>
        <path d="M2 2h7l6 16H8L2 7zM5 2l8 18M15 10h7v13h-7z" {...stroke(1.400)} />
      </Icon>
    </DockGroup>
    <DockGroup $h={69} $gap={11}>
      <Grip $across $w={20} $h={4} />
      <Icon w={18} h={17}>
        <path d="M13 2h9v2h-1.500v18h-2V4h-1.500v12h-2v-7c-3 0-4-2-4-3.500S12 2 13 2z" />
        <path d="M1 12h8v8H1z" {...stroke(1.500)} />
        <path d="M7 18h7v5H7z" fill="#d0d0d0" />
      </Icon>
      <Icon w={20}>
        <path d="M10 17 15 2h2l5 15h-2.500l-1-3.500h-5l-1 3.500zM14 11h4l-2-6z" />
        <path d="M1 15h6v6H1z" {...stroke(1.500)} />
        <path d="M5 19h6v5H5z" />
      </Icon>
    </DockGroup>
    <DockGroup $h={41}>
      <Grip $across $w={20} $h={4} />
      <Icon w={18}>
        <path d="M12 1 22 6.500v11L12 23 2 17.500v-11zM2 6.500 12 12l10-5.500M12 12v11" {...stroke(1.500)} />
      </Icon>
    </DockGroup>
    <DockGroup $h={69} $gap={7}>
      <Grip $across $w={20} $h={4} />
      <Icon w={18} h={20}>
        <path d="M6 12h12v11H6z" />
        <path d="M11 11c-1-4-1-7 1-10 2 3 2 6 1 10zM6 11C5 8 2 7 1 6c3-2 6 0 6 5zM18 11c1-3 4-4 5-5-3-2-6 0-6 5z" />
      </Icon>
      <Icon w={20}>
        <path d="M9 5h14v2H9zM1 17h14v2H1z" />
        <path d="M1 6c2-3 7-3 8 0-1 3-6 3-8 0zM23 12v12c-3 0-7-2-8-5 1-3 5-7 8-7z" />
      </Icon>
    </DockGroup>
  </Dock>
);

const AdjustIcon = ({ w = 12 }) => (
  <Icon w={w} c="#d0d0d0" box="0 0 12 12">
    <circle cx="6" cy="6" r="5.500" />
    <path d="M10 2 2 10a5 5 0 0 1 8-8z" fill="#333" />
  </Icon>
);

const LayerPanel = () => (
  <>
    <PanelTabs>
      <PanelTab $w={42}>Цвет</PanelTab>
      <PanelTab $w={65}>Образцы</PanelTab>
      <PanelTab $w={43} $active>Слои</PanelTab>
      <PanelTab $w={62}>Контуры</PanelTab>
      <PanelTab $w={56}>Каналы</PanelTab>
      <PanelMenu />
    </PanelTabs>
    <LayerFilters>
      <Select $w={124}>
        <SelectLead>
          <Icon w={11} c="#c8c8c8" box="0 0 11 11">
            <circle cx="7" cy="4" r="3.200" {...stroke(1.200)} />
            <path d="M4.700 6.300.7 10.300" {...stroke(1.600)} />
          </Icon>
          Вид
        </SelectLead>
        <Chevron />
      </Select>
      <FilterIcons>
        <Icon w={12} box="0 0 13 13">
          <path d="M.5 1.500h12v10H.5z" {...stroke(1)} />
          <path d="M2 10l3-4 2 2 2-2 2 4z" />
        </Icon>
        <AdjustIcon />
        <Icon w={12} box="0 0 24 24">
          <path d="M2 2h20v7h-2c0-3-1-4-5-4v14l3 2v2H6v-2l3-2V5c-4 0-5 1-5 4H2z" />
        </Icon>
        <ShapeIcon w={12} />
        <Icon w={12} box="0 0 12 14">
          <path d="M5.500.5h3l3 3v8h-5M5.500.5V6" {...stroke(1)} />
          <path d="M0 7h6v7H0z" />
        </Icon>
      </FilterIcons>
      <Toggle />
    </LayerFilters>
    <BlendRow>
      <Select $w={190}>
        Обычные <Chevron />
      </Select>
      <Label $ml={7}>Непрозрачность:</Label>
      <Field $w={53} $ml={3} $pr={1}>
        100% <Chevron />
      </Field>
    </BlendRow>
    <LockRow>
      <Label>Закрепить:</Label>
      <Icon w={12} ml={9} box="0 0 12 12">
        <path d="M0 0h4v4H0zM8 0h4v4H8zM4 4h4v4H4zM0 8h4v4H0zM8 8h4v4H8z" fill="#9a9a9a" />
        <path d="M4 0h4v4H4zM0 4h4v4H0zM8 4h4v4H8zM4 8h4v4H4z" fill="#5a5a5a" />
      </Icon>
      <Icon w={13} ml={10} c="#8a8a8a">
        <path d="M22 1c-1 5-5 11-10 15l-3-3C13 8 18 3 22 1zM8 14l3 3c-1 4-4 5-8 5 2-2 1-7 5-8z" />
      </Icon>
      <MoveGlyph w={14} ml={9} />
      <Icon w={14} ml={8} box="0 0 14 14">
        <path d="M2 3h10v9H2z" {...stroke(1)} strokeDasharray="2 1" />
        <path d="M0 3h14M2 1v13M9 0l4 4" {...stroke(1)} />
      </Icon>
      <Icon w={11} h={13} ml={10} c="#c8c8c8" box="0 0 12 14">
        <path d="M3 6V4a3 3 0 0 1 6 0v2" {...stroke(1.200)} />
        <path d="M1 6h10v8H1z" />
        <circle cx="6" cy="10" r="1.300" fill="#333" />
      </Icon>
      <Label $ml={72}>Заливка:</Label>
      <Field $w={53} $ml={4} $pr={1}>
        100% <Chevron />
      </Field>
    </LockRow>
    <LayersBody>
      <LayerList>
        <Layer>
          <EyeCell><Eye /></EyeCell>
          <Clipped>
            <Icon w={7} h={9} c="#c8c8c8" box="0 0 7 9">
              <path d="M7 .5H3V6H1l2.500 3L6 6H4V1.500h3z" />
            </Icon>
          </Clipped>
          <Thumb>
            <ThumbFill $h={8} $w={30} $top={13} $c="#d1d1d1" />
            <ShapeBadge><ShapeIcon w={11} /></ShapeBadge>
          </Thumb>
          <LayerName $ml={10}>Прямоугольник 1</LayerName>
        </Layer>
        <Layer $selected>
          <EyeCell><Eye /></EyeCell>
          <Thumb $ml={2}>
            <ThumbFill $h={19} $w={29} $top={9} $c={PURPLE} />
            <ShapeBadge><ShapeIcon w={11} /></ShapeBadge>
            <Brackets viewBox="0 0 44 60">
              <path d="M14 .5H.5V14M30 .5H43.500V14M14 59.500H.5V46M30 59.500H43.500V46" fill="none" stroke="#fff" strokeWidth="1" />
            </Brackets>
          </Thumb>
          <LayerName $ml={8} $under>Прямоугольник 2</LayerName>
        </Layer>
        <Layer>
          <EyeCell><Eye /></EyeCell>
          <Thumb $ml={2} $plain />
          <LayerName $ml={11} $italic>Фон</LayerName>
          <LayerLock>
            <Icon w={11} h={13} c="#c8c8c8" box="0 0 12 14">
              <path d="M3 6V4a3 3 0 0 1 6 0v2" {...stroke(1.200)} />
              <path d="M1 6.500h10v7H1z" {...stroke(1)} />
              <circle cx="6" cy="10" r="1.300" />
            </Icon>
          </LayerLock>
        </Layer>
      </LayerList>
      <LayerRail />
    </LayersBody>
    <LayersFooter>
      <LinkIcon />
      <HasMenu>
        <FxMark>fx</FxMark>
      </HasMenu>
      <Icon w={14} h={10} c="#d0d0d0" box="0 0 14 10">
        <path fillRule="evenodd" d="M0 0h14v10H0zM7 2.500a2.500 2.500 0 1 0 0 5 2.500 2.500 0 0 0 0-5z" />
      </Icon>
      <HasMenu $r={-3}>
        <AdjustIcon />
      </HasMenu>
      <Icon w={13} h={11} c="#d0d0d0" box="0 0 13 11">
        <path d="M0 0h5l1 2h7v9H0z" />
      </Icon>
      <Icon w={13} c="#d0d0d0" box="0 0 13 13">
        <path d="M1 1h11v8l-3 3H4V4.500" {...stroke(1.200)} />
      </Icon>
      <Icon w={12} h={13} c="#d0d0d0" box="0 0 12 13">
        <path d="M0 2h12M4 2V.5h4V2M2 2.500V12.500h8v-10M4.500 4.500v6M7.500 4.500v6" {...stroke(1)} />
      </Icon>
    </LayersFooter>
    <PanelGap $h={4} />
  </>
);

const PropertiesPanel = () => (
  <>
    <PanelTabs $h={27}>
      <PanelTab $w={73}>Коррекция</PanelTab>
      <PanelTab $w={50}>Стили</PanelTab>
      <PanelTab $w={64} $active>Свойства</PanelTab>
      <PanelTab $w={60}>История</PanelTab>
      <PanelMenu />
    </PanelTabs>
    <PropsHead>
      <ShapeBtn><ShapeIcon w={13} /></ShapeBtn>
      <MaskBtn />
      <PropsTitle>Свойства интерактивной формы</PropsTitle>
    </PropsHead>
    <PropsBody>
      <PropsMain>
        <PropRow $h={28} $pl={10}>
          <FieldLabel $w={13}>Ш:</FieldLabel>
          <Field $w={77} $ml={6}>671 пикс.</Field>
          <LinkSlot><LinkIcon ml={10} /></LinkSlot>
          <FieldLabel $w={23}>В:</FieldLabel>
          <Field $w={77} $ml={6}>444 пикс.</Field>
        </PropRow>
        <PropRow $h={30} $pl={10} $pb={4} $line>
          <FieldLabel $w={13}>X:</FieldLabel>
          <Field $w={77} $ml={6}>-12 пикс.</Field>
          <FieldLabel $w={47}>Y:</FieldLabel>
          <Field $w={77} $ml={5}>197 пикс.</Field>
        </PropRow>
        <PropRow $h={27} $pl={7} $pb={2}>
          <Swatch $fill={PURPLE}><div /></Swatch>
          <StrokeSwatch ml={4} />
          <Field $w={80} $ml={4} $pr={1}>5 пикс. <Chevron /></Field>
          <LineSelect $w={76} $ml={4}><i /><Chevron /></LineSelect>
        </PropRow>
        <PropRow $h={26} $pl={7} $pb={4} $line>
          <Select $w={64}>
            <Icon w={12} ml={1} c="#cfcfcf" box="0 0 12 12">
              <path d="M1.500 1.500h9v9h-9z" {...stroke(1.500)} />
              <path d="M4 4h4v4H4z" />
              <path d="M0 0h2v2H0zM10 0h2v2h-2zM0 10h2v2H0zM10 10h2v2h-2z" />
            </Icon>
            <Chevron />
          </Select>
          <Select $w={66} $ml={4}>
            <Icon w={12} h={11} c="#d6d6d6" box="0 0 12 11">
              <path d="M2 2h9v7H2z" />
              <path d="M0 4h5v3H0z" fill="#111" />
            </Icon>
            <Chevron />
          </Select>
          <Select $w={51} $ml={4}>
            <Icon w={12} c="#d6d6d6" box="0 0 12 12">
              <path d="M0 0h12v7H8v5H0z" />
              <path d="M4 4h5v2H6v6H4z" fill="#111" />
            </Icon>
            <Chevron />
          </Select>
        </PropRow>
        <PropRow $h={20} $pl={25}>
          <Field $w={211}>0пикс.0пикс.0пикс.0пикс.</Field>
        </PropRow>
        <PropRow $h={21} $pl={10}>
          <CornerIcon />
          <Field $w={88} $ml={7}>0 пикс.</Field>
          <Field $w={88} $ml={4}>0 пикс.</Field>
          <CornerIcon $right $ml={7} />
        </PropRow>
        <MiniTab />
      </PropsMain>
      <Scroll>
        <Icon w={8} h={5} c="#8a8a8a" box="0 0 10 6"><path d="M.5 5.500 5 1l4.500 4.500" {...stroke(1)} /></Icon>
        <ScrollThumb />
        <ScrollEnd><Chevron c="#8a8a8a" w={8} /></ScrollEnd>
      </Scroll>
    </PropsBody>
    <PanelGap $h={26} />
    <PanelTabs $h={30}>
      <PanelTab $w={47}>Инфо</PanelTab>
      <PanelTab $w={56} $active>Символ</PanelTab>
      <PanelTab $w={48}>Абзац</PanelTab>
      <PanelMenu />
    </PanelTabs>
  </>
);

const TaskbarRow = () => (
  <Taskbar>
    <TaskSlot $w={50}>
      <Icon w={37} box="0 0 36 36">
        <defs>
          <radialGradient id="orb" cy=".85" r=".8">
            <stop offset="0" stopColor="#4ac0f0" />
            <stop offset=".6" stopColor="#1f5f95" />
            <stop offset="1" stopColor="#0f3456" />
          </radialGradient>
        </defs>
        <circle cx="18" cy="18" r="17.500" fill="url(#orb)" stroke="#17324d" />
        <path d="M9 11c3-2 6-2 8 0l-1.500 6c-2-1.500-5-2-8 0z" fill="#e4552a" />
        <path d="M18 11.500c3 1.500 6 1.500 9-.5l-1.500 6c-3 1.500-6 1.500-9 .5z" fill="#7cbb2e" />
        <path d="M7 18.500c3-2 6-1.500 8 0L13.500 25c-2-1.500-5-1.500-8 0z" fill="#2a9fe0" />
        <path d="M16.500 19c3 1 6 1 9-.5L24 25c-3 1.500-6 1.500-9 .5z" fill="#f4c11f" />
      </Icon>
    </TaskSlot>
    <TaskSlot $w={70}>
      <Icon w={32} box="0 0 32 32">
        <circle cx="16" cy="17" r="8.500" fill="none" stroke="#1a78c8" strokeWidth="4" />
        <path d="M10 16.500h14" stroke="#1a78c8" strokeWidth="3" />
        <path d="M22 20h5v2l-3 1z" fill="#aac4df" />
        <path d="M4 29C0 26 8 10 18 6c6-3 12-4 13-2 1 1-1 5-4 8M4 29c2 2 6 0 9-3" fill="none" stroke="#e8a21e" strokeWidth="1.800" />
      </Icon>
    </TaskSlot>
    <TaskSlot $w={52} $ml={1} $open>
      <Icon w={32} box="0 0 32 32">
        <path d="M2 5h28l-2 24H4z" fill="#f2d778" />
        <path d="M4 3h24v8H4z" fill="#fff8dc" />
        <path d="M7 3h6v2H7z" fill="#3fa33f" />
        <path d="M14 5h6v2h-6z" fill="#d83c3c" />
        <path d="M21 6h5v2h-5z" fill="#3f8fd8" />
        <path d="M1 12h30l-2 17H3z" fill="#f7e39a" />
        <path d="M7 19h18v10h-5v-6h-8v6H7z" fill="#8fc6e8" />
      </Icon>
    </TaskSlot>
    <TaskDivider />
    <TaskSlot $w={60} $ml={2}>
      <Icon w={28} box="0 0 28 28">
        <path d="M2 3h22v23H2z" fill="#8fc4e8" stroke="#5a9ccb" />
        <circle cx="13" cy="14" r="8.500" fill="#ef7d1a" />
        <path d="M10 9.500 18 14l-8 4.500z" fill="#fff" />
      </Icon>
    </TaskSlot>
    <TaskSlot $w={66}>
      <Icon w={31} h={34} box="0 0 32 34">
        <path d="M9 1h14c5 0 8 3 8 8v11c0 5-3 8-8 8h-6l-6 6v-6H9c-5 0-8-3-8-8V9c0-5 3-8 8-8z" fill="#7c51a1" stroke="#fff" strokeWidth="1.800" />
        <path d="M10 8c1-1 2-1 3 0l2 3-1 2c1 2 2 3 4 4l2-1 3 2c1 1 1 2 0 3-2 2-5 2-8 0-3-2-5-4-6-8 0-2 0-4 1-5z" fill="#fff" />
        <path d="M17 7c4 0 7 3 7 7M17 10c2 0 4 2 4 4" fill="none" stroke="#fff" strokeWidth="1.200" />
      </Icon>
    </TaskSlot>
    <TaskSlot $w={58} $open>
      <Icon w={30} box="0 0 30 30">
        <path d="M15 15 2 7.500A15 15 0 0 1 28 7.500z" fill="#db4437" />
        <path d="M15 15 28 7.500A15 15 0 0 1 15 30z" fill="#f4c20d" />
        <path d="M15 15 15 30A15 15 0 0 1 2 7.500z" fill="#3aa757" />
        <circle cx="15" cy="15" r="7" fill="#fff" />
        <circle cx="15" cy="15" r="5.500" fill="#4285f4" />
      </Icon>
    </TaskSlot>
    <TaskSlot $w={58} $ml={4} $open>
      <SkypeWrap>S</SkypeWrap>
    </TaskSlot>
    <TaskSlot $w={58} $ml={4} $open $focus>
      <PsTile>Ps</PsTile>
    </TaskSlot>
    <Tray>
      <TrayText>EN</TrayText>
      <Icon w={10} h={6} ml={16} c="#eef3f8" box="0 0 10 6"><path d="M5 0l5 6H0z" /></Icon>
      <Icon w={16} ml={12} c="#ef7d1a" box="0 0 16 16">
        <path d="M14 0c2 2 1 5 0 6l2 3c0 2-3 2-4 2l-1 4c-2 1-4-1-4-3L2 13C0 11 1 8 3 7L1 3c1-2 4-1 5 0 2-1 5-1 8-3z" />
        <circle cx="8" cy="8" r="2.200" fill="none" stroke="#fff" strokeWidth="1.200" />
      </Icon>
      <Icon w={15} h={16} ml={8} c="#fff" box="0 0 15 16">
        <path d="M1.500 2h9v13h-9z" fill="#555" stroke="#fff" />
        <path d="M5 6h5v4l-2 2v3H7v-3L5 10z" />
        <path d="M11 8h3v2h-3z" />
      </Icon>
      <Icon w={15} ml={9} c="#eef3f8" box="0 0 15 16">
        <path d="M1 5h3l4-4v14l-4-4H1z" />
        <path d="M10 5c1 2 1 4 0 6M12.500 3c2 3 2 7 0 10" {...stroke(1)} />
      </Icon>
      <Icon w={16} h={14} ml={9} c="#fff" box="0 0 16 14">
        <path d="M0 11h2v3H0zM3 9h2v5H3zM6 7h2v7H6zM9 4h2v10H9zM12 1h3v13h-3z" />
      </Icon>
      <Clock>
        16:12
        <br />
        13.08.2017
      </Clock>
      <ShowDesktop />
    </Tray>
  </Taskbar>
);

export default function App() {
  return (
    <Screen>
      <Global />
      <MenuRow />
      <Options />
      <Workspace>
        <Tools />
        <DocumentArea />
        <DockBar />
        <Panels>
          <CollapseStrip $justify="flex-end">
            <Arrows flip />
          </CollapseStrip>
          <LayerPanel />
          <PropertiesPanel />
        </Panels>
      </Workspace>
      <TaskbarRow />
    </Screen>
  );
}
